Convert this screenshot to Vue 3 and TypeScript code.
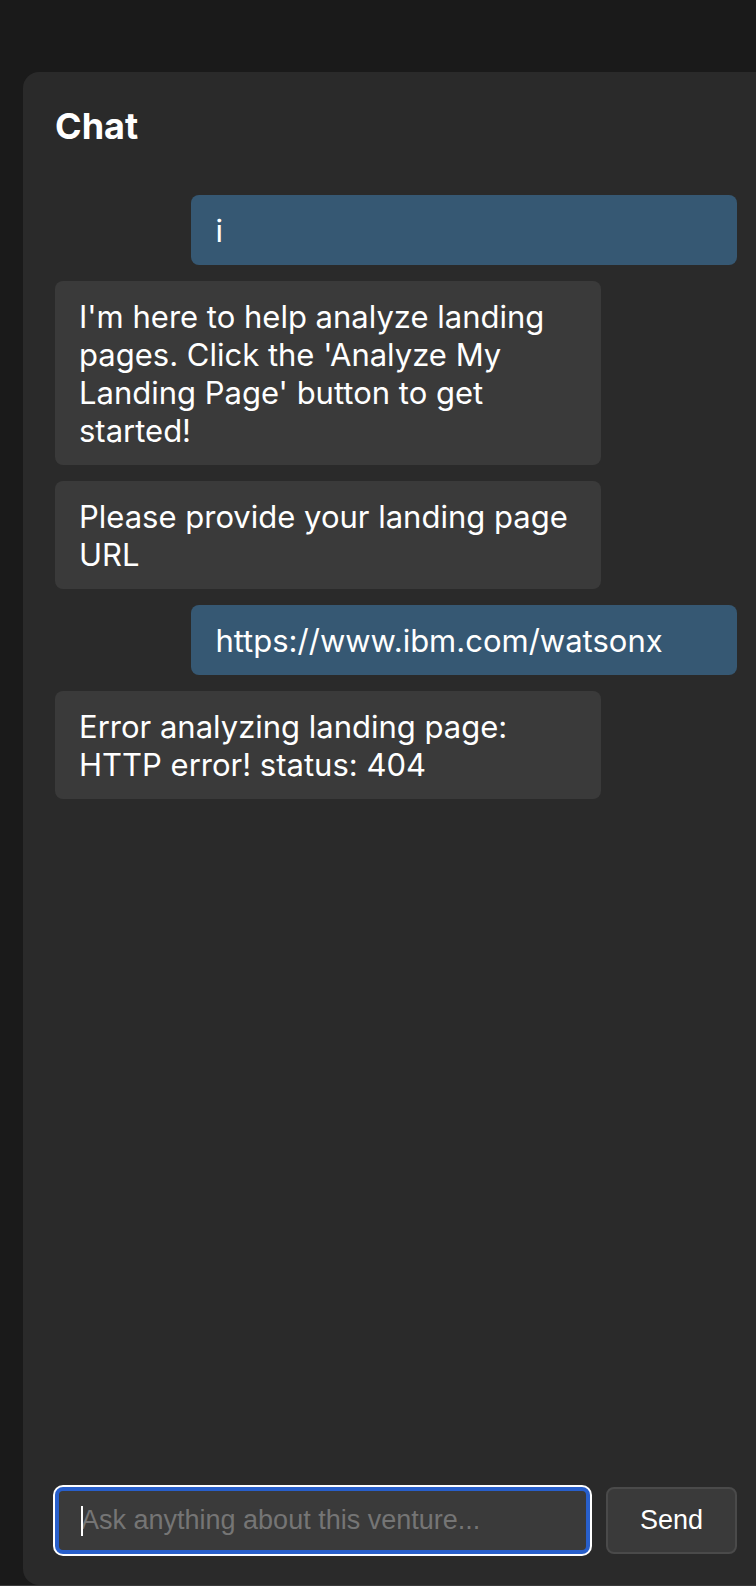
<script setup lang="ts">
import { onMounted, ref } from 'vue'

interface Message {
  id: number
  from: 'user' | 'assistant'
  text: string
}

const messages = ref<Message[]>([
  { id: 1, from: 'user', text: 'i' },
  {
    id: 2,
    from: 'assistant',
    text: "I'm here to help analyze landing pages. Click the 'Analyze My Landing Page' button to get started!",
  },
  { id: 3, from: 'assistant', text: 'Please provide your landing page URL' },
  { id: 4, from: 'user', text: 'https://www.ibm.com/watsonx' },
  { id: 5, from: 'assistant', text: 'Error analyzing landing page: HTTP error! status: 404' },
])

const draft = ref('')
const field = ref<HTMLInputElement | null>(null)

function send() {
  const text = draft.value.trim()
  if (!text) return
  messages.value.push({ id: messages.value.length + 1, from: 'user', text })
  draft.value = ''
}

onMounted(() => field.value?.focus())
</script>

<template>
  <main class="page">
    <section class="panel">
      <h2 class="title">Chat</h2>
      <div class="messages">
        <p v-for="m in messages" :key="m.id" class="message" :class="m.from">{{ m.text }}</p>
      </div>
      <form class="composer" @submit.prevent="send">
        <div class="field">
          <input
            ref="field"
            v-model="draft"
            class="input"
            type="text"
            aria-label="Message"
            placeholder="Ask anything about this venture..."
          />
          <span v-if="!draft" class="caret" aria-hidden="true"></span>
        </div>
        <button class="send" type="submit">Send</button>
      </form>
    </section>
  </main>
</template>

<style>
body {
  margin: 0;
  background: #1a1a1a;
}
</style>

<style scoped>
.page {
  box-sizing: border-box;
  display: flex;
  min-height: 100vh;
  padding: 72px 0 0 23px;
  border-bottom: 1px solid #3a3a3a;
  background: #1a1a1a;
  color: #fff;
  font-family: Inter, "Liberation Sans", sans-serif;
}

.panel {
  box-sizing: border-box;
  flex: 1;
  min-width: 0;
  display: flex;
  flex-direction: column;
  padding: 32px 19px 31px 32px;
  border-radius: 16px 0 0 16px;
  background: #2a2a2a;
}

.title {
  margin: 0 0 47px;
  font-size: 36px;
  line-height: 44px;
  font-weight: 700;
}

.messages {
  flex: 1;
  display: flex;
  flex-direction: column;
  gap: 16px;
}

.message {
  box-sizing: border-box;
  width: 80%;
  margin: 0;
  padding: 17px 24px 15px;
  border-radius: 8px;
  font-size: 31px;
  line-height: 38px;
  overflow-wrap: anywhere;
}

.assistant {
  align-self: flex-start;
  background: #3a3a3a;
}

.user {
  align-self: flex-end;
  background: #365873;
}

.composer {
  display: flex;
  gap: 16px;
  margin-top: 32px;
}

.field {
  position: relative;
  flex: 1;
  min-width: 0;
  display: flex;
}

.input,
.send {
  box-sizing: border-box;
  height: 67px;
  margin: 0;
  border: 2px solid #4a4a4a;
  border-radius: 8px;
  background: #3a3a3a;
  color: #fff;
  font-family: "Liberation Sans", Arial, sans-serif;
  font-size: 27px;
  line-height: 32px;
}

.input {
  width: 100%;
  padding: 0 24px;
  caret-color: transparent;
}

.input::placeholder {
  color: #757575;
  opacity: 1;
}

.input:focus {
  border: 4px solid #285fcb;
  padding: 0 22px;
  outline: none;
  box-shadow: 0 0 0 2px #fff;
}

.caret {
  position: absolute;
  top: 19px;
  left: 26px;
  width: 2px;
  height: 30px;
  background: #fff;
}

.send {
  width: 131px;
  padding: 0 0 2px;
  cursor: pointer;
}
</style>
